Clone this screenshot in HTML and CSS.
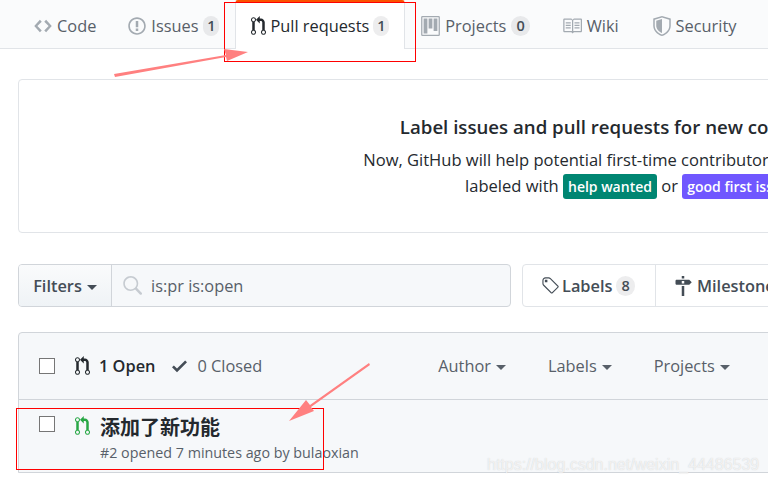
FILE: index.html
```html
<!DOCTYPE html>
<html lang="en">
<head>
  <meta charset="UTF-8" />
  <title>Pull requests</title>
  <link rel="stylesheet" href="styles.css">
</head>
<body>
  <svg class="sprite" xmlns="http://www.w3.org/2000/svg">
    <symbol id="i-pr" viewBox="0 0 12 16"><path d="M11 11.28V5c-.03-.78-.34-1.47-.94-2.06C9.46 2.35 8.78 2.03 8 2H7V0L4 3l3 3V4h1c.27.02.48.11.69.31.21.2.3.42.31.69v6.28A1.993 1.993 0 0 0 10 15a1.993 1.993 0 0 0 1-3.72zm-1 2.92c-.66 0-1.2-.55-1.2-1.2 0-.65.55-1.2 1.2-1.2.65 0 1.2.55 1.2 1.2 0 .65-.55 1.2-1.2 1.2zM4 3c0-1.11-.89-2-2-2a1.993 1.993 0 0 0-1 3.72v6.56A1.993 1.993 0 0 0 2 15a1.993 1.993 0 0 0 1-3.72V4.72c.59-.34 1-.98 1-1.72zm-.8 10c0 .66-.55 1.2-1.2 1.2-.65 0-1.2-.55-1.2-1.2 0-.65.55-1.2 1.2-1.2.65 0 1.2.55 1.2 1.2zM2 4.2C1.34 4.2.8 3.65.8 3c0-.65.55-1.2 1.2-1.2.65 0 1.2.55 1.2 1.2 0 .65-.55 1.2-1.2 1.2z"/></symbol>
    <symbol id="i-code" viewBox="0 0 14 16"><path d="M9.5 3L8 4.5 11.5 8 8 11.5 9.5 13 14 8 9.5 3zm-5 0L0 8l4.5 5L6 11.5 2.5 8 6 4.5 4.5 3z"/></symbol>
    <symbol id="i-issue" viewBox="0 0 14 16"><path d="M7 2.3c3.14 0 5.7 2.56 5.7 5.7s-2.56 5.7-5.7 5.7A5.71 5.71 0 0 1 1.3 8c0-3.14 2.56-5.7 5.7-5.7zM7 1C3.14 1 0 4.14 0 8s3.14 7 7 7 7-3.14 7-7-3.14-7-7-7zm1 3H6v5h2V4zm0 6H6v2h2v-2z"/></symbol>
    <symbol id="i-project" viewBox="0 0 15 16"><path d="M10 12h3V2h-3v10zm-4-2h3V2H6v8zm-4 4h3V2H2v12zm-1 1h13V1H1v14zM14 0H1a1 1 0 0 0-1 1v14a1 1 0 0 0 1 1h13a1 1 0 0 0 1-1V1a1 1 0 0 0-1-1z"/></symbol>
    <symbol id="i-book" viewBox="0 0 16 16"><path d="M3 5h4v1H3V5zm0 3h4V7H3v1zm0 2h4V9H3v1zm11-5h-4v1h4V5zm0 2h-4v1h4V7zm0 2h-4v1h4V9zm2-6v9c0 .55-.45 1-1 1H9.5l-1 1-1-1H2c-.55 0-1-.45-1-1V3c0-.55.45-1 1-1h5.5l1 1 1-1H15c.55 0 1 .45 1 1zm-8 .5L7.5 3H2v9h6V3.5zm7-.5H9.5l-.5.5V12h6V3z"/></symbol>
    <symbol id="i-shield" viewBox="0 0 14 16"><path d="M7 0L0 2v6.02C0 12.69 5.31 16 7 16c1.69 0 7-3.31 7-7.98V2L7 0zm5.8 8.02c0 3.9-4.5 6.78-5.8 6.78-1.3 0-5.8-2.88-5.8-6.78V2.9L7 1.25l5.8 1.65v5.12z"/><path d="M7 2.4L2.4 3.7v4.3c0 2.9 3.3 5.3 4.6 5.6V2.4z"/></symbol>
    <symbol id="i-tag" viewBox="0 0 15 16"><path d="M7.73 1.73C7.26 1.26 6.62 1 5.96 1H3.5C2.13 1 1 2.13 1 3.5v2.47c0 .66.27 1.3.73 1.77l6.06 6.06c.39.39 1.02.39 1.41 0l4.59-4.59a.996.996 0 0 0 0-1.41L7.73 1.73zM2.38 7.09c-.31-.3-.47-.7-.47-1.13V3.5c0-.88.72-1.59 1.59-1.59h2.47c.42 0 .83.16 1.13.47l6.14 6.13-4.73 4.73-6.13-6.15zM3.01 3h2v2H3V3h.01z"/></symbol>
    <symbol id="i-milestone" viewBox="0 0 14 16"><path d="M8 2H6V0h2v2zm4 5H2c-.55 0-1-.45-1-1V4c0-.55.45-1 1-1h10l2 2-2 2zM8 4H6v2h2V4zM6 16h2V8H6v8z"/></symbol>
    <symbol id="i-check" viewBox="0 0 12 16"><path d="M12 5l-8 8-4-4 1.5-1.5L4 10l6.5-6.5L12 5z"/></symbol>
    <symbol id="i-search" viewBox="0 0 16 16"><path d="M15.7 13.3l-3.81-3.83A5.93 5.93 0 0 0 13 6c0-3.31-2.69-6-6-6S1 2.69 1 6s2.69 6 6 6c1.3 0 2.48-.41 3.47-1.11l3.83 3.81c.19.2.45.3.7.3.25 0 .52-.09.7-.3a.996.996 0 0 0 0-1.41v.01zM7 10.7c-2.59 0-4.7-2.11-4.7-4.7 0-2.59 2.11-4.7 4.7-4.7 2.59 0 4.7 2.11 4.7 4.7 0 2.59-2.11 4.7-4.7 4.7z"/></symbol>
  </svg>

  <div class="page">
    <nav class="tabs">
      <a class="tab"><svg class="icon w18"><use href="#i-code"/></svg>Code</a>
      <a class="tab"><svg class="icon w18"><use href="#i-issue"/></svg>Issues<span class="count">1</span></a>
      <a class="tab active"><svg class="icon w15"><use href="#i-pr"/></svg>Pull requests<span class="count">1</span></a>
      <a class="tab"><svg class="icon w19"><use href="#i-project"/></svg>Projects<span class="count wide">0</span></a>
      <a class="tab wiki"><svg class="icon w20"><use href="#i-book"/></svg>Wiki</a>
      <a class="tab"><svg class="icon w18"><use href="#i-shield"/></svg>Security</a>
    </nav>

    <main class="content">
      <section class="banner">
        <h2>Label issues and pull requests for new contributors</h2>
        <p>Now, GitHub will help potential first-time contributors discover issues</p>
        <p>labeled with <span class="tag green">help wanted</span> or <span class="tag purple">good first issue</span></p>
      </section>

      <div class="toolbar">
        <div class="filter-group">
          <button class="filters">Filters<span class="caret"></span></button>
          <div class="search"><svg class="icon w20"><use href="#i-search"/></svg>is:pr is:open</div>
        </div>
        <div class="nav-group">
          <a class="nav-btn labels"><svg class="icon w19"><use href="#i-tag"/></svg>Labels<span class="count wide">8</span></a>
          <a class="nav-btn"><svg class="icon w18"><use href="#i-milestone"/></svg>Milestones</a>
        </div>
      </div>

      <section class="list">
        <header class="list-head">
          <span class="checkbox"></span>
          <span class="state open"><svg class="icon w15"><use href="#i-pr"/></svg>1 Open</span>
          <span class="state closed"><svg class="icon w15"><use href="#i-check"/></svg>0 Closed</span>
          <div class="sorts">
            <span>Author<span class="caret"></span></span>
            <span>Labels<span class="caret"></span></span>
            <span>Projects<span class="caret"></span></span>
          </div>
        </header>
        <div class="list-row">
          <span class="checkbox"></span>
          <svg class="icon w15 pr-green"><use href="#i-pr"/></svg>
          <div class="row-text">
            <div class="row-title">添加了新功能</div>
            <div class="row-meta">#2 opened 7 minutes ago by bulaoxian</div>
          </div>
        </div>
      </section>
    </main>
  </div>

  <!-- annotations drawn over the screenshot -->
  <div class="mark mark-tab"></div>
  <div class="mark mark-row"></div>
  <svg class="arrows" width="768" height="483" xmlns="http://www.w3.org/2000/svg">
    <path d="M114 74 L226 55 L224 49 L248 52 L227 61 L226 57 L115 77 Z"/>
    <path d="M369 363 L310 405 L306 400 L289 421 L314 411 L311 407 L370 365 Z"/>
  </svg>
  <div class="watermark">https://blog.csdn.net/weixin_44486539</div>
</body>
</html>
```

FILE: styles.css
```css
html, body {
  margin: 0;
  padding: 0;
  height: 483px;
  overflow: hidden;
}
body {
  position: relative;
  font-family: "Open Sans", "Noto Sans CJK SC", sans-serif;
  font-size: 16.35px;
  color: #24292e;
  background: #fff;
}
.sprite {
  display: none;
}
.page {
  width: 1280px;
}
.icon {
  height: 20px;
  flex: none;
  fill: currentColor;
  fill-rule: evenodd;
}
.w15 { width: 15px; }
.w18 { width: 18px; }
.w19 { width: 19px; }
.w20 { width: 20px; }

/* tabs */
.tabs {
  display: flex;
  height: 48px;
  padding-left: 18px;
  background: #fafbfc;
  border-bottom: 1px solid #e1e4e8;
}
.tab {
  display: flex;
  align-items: center;
  gap: 5px;
  height: 48px;
  padding: 3px 16px 0;
  box-sizing: border-box;
  color: #586069;
}
.tab.wiki {
  padding-right: 18px;
}
.tab .icon {
  color: #a3aab1;
}
.tab.active {
  height: 49px;
  padding: 0 15px 1px;
  color: #24292e;
  background: #fff;
  border-top: 3px solid #fb5200;
  border-left: 1px solid #e1e4e8;
  border-right: 1px solid #e1e4e8;
  border-radius: 3px 3px 0 0;
  gap: 4px;
}
.tab.active .icon {
  color: #24292e;
}
.count {
  display: inline-block;
  min-width: 16px;
  padding: 0 3.5px;
  box-sizing: border-box;
  border-radius: 20px;
  background: rgba(27, 31, 35, 0.08);
  color: #444d56;
  font-size: 14.5px;
  font-weight: 600;
  line-height: 20px;
  text-align: center;
}
.count.wide {
  padding: 0 5px;
}

/* banner */
.content {
  padding: 30px 38px 0 18px;
}
.banner {
  height: 154px;
  box-sizing: border-box;
  padding-top: 32px;
  border: 1px solid #e1e4e8;
  border-radius: 4px;
  text-align: center;
}
.banner h2 {
  margin: 0 0 5px;
  font-size: 18.65px;
  font-weight: 600;
  line-height: 30px;
}
.banner p {
  margin: 0;
  font-size: 16.55px;
  line-height: 26px;
}
.tag {
  display: inline-block;
  padding: 0 5px;
  border-radius: 3px;
  color: #fff;
  font-size: 14px;
  font-weight: 600;
  line-height: 25px;
}
.green { background: #008672; }
.purple { background: #7057ff; }

/* filter bar */
.toolbar {
  display: flex;
  gap: 11px;
  margin-top: 31px;
}
.filter-group {
  display: flex;
  height: 43px;
  width: 493px;
  box-sizing: border-box;
  border: 1px solid #d1d5da;
  border-radius: 4px;
  background: #f6f8fa;
}
.filters {
  width: 93px;
  padding: 0;
  border: 0;
  border-right: 1px solid #d1d5da;
  border-radius: 3px 0 0 3px;
  background: linear-gradient(#fafbfc, #eff3f6);
  color: #444d56;
  font: 600 16.35px "Open Sans", sans-serif;
}
.caret {
  display: inline-block;
  margin-left: 5px;
  vertical-align: middle;
  border-top: 5px solid currentColor;
  border-left: 5px solid transparent;
  border-right: 5px solid transparent;
}
.search {
  display: flex;
  align-items: center;
  gap: 9px;
  padding-left: 10px;
  color: #586069;
}
.search .icon {
  color: #c6cbd1;
}
.nav-group {
  display: flex;
  height: 43px;
  flex: 1;
  box-sizing: border-box;
  border: 1px solid #e1e4e8;
  border-radius: 4px;
}
.nav-btn {
  display: flex;
  align-items: center;
  gap: 5px;
  padding: 0 18px;
  color: #444d56;
  font-weight: 600;
}
.nav-btn.labels {
  width: 133px;
  box-sizing: border-box;
  gap: 2px;
  border-right: 1px solid #e1e4e8;
}
.nav-btn.labels .count {
  margin-left: 2px;
}

/* pull request list */
.list {
  margin-top: 25px;
  border: 1px solid #d1d5da;
  border-radius: 4px 4px 0 0;
  background: #f6f8fa;
}
.list-head {
  display: flex;
  align-items: center;
  height: 66px;
  padding-left: 20px;
  border-bottom: 1px solid #d1d5da;
  color: #586069;
}
.checkbox {
  flex: none;
  display: block;
  width: 14px;
  height: 14px;
  border: 1px solid #767676;
  background: #fff;
}
.state {
  display: flex;
  align-items: center;
  gap: 9px;
}
.state.open {
  margin-left: 20px;
  color: #24292e;
  font-weight: 600;
}
.state.closed {
  margin-left: 17px;
  gap: 10px;
}
.state.closed .icon {
  color: #444d56;
}
.sorts {
  display: flex;
  gap: 42px;
  margin-left: 176px;
}
.list-row {
  display: flex;
  align-items: flex-start;
  height: 72px;
  box-sizing: border-box;
  padding: 16px 0 0 20px;
}
.pr-green {
  margin: 0 0 0 20px;
  color: #28a745;
}
.row-text {
  margin-left: 10px;
}
.row-title {
  margin-top: -1px;
  font-size: 20px;
  font-weight: 700;
  line-height: 26px;
}
.row-meta {
  margin-top: 2px;
  color: #586069;
  font-size: 14.3px;
  line-height: 20px;
}

/* annotations */
.mark {
  position: absolute;
  box-sizing: border-box;
  border: 1px solid #f00;
}
.mark-tab {
  left: 224px;
  top: 2px;
  width: 192px;
  height: 60px;
}
.mark-row {
  left: 16px;
  top: 408px;
  width: 308px;
  height: 62px;
}
.arrows {
  position: absolute;
  left: 0;
  top: 0;
  fill: #ff8080;
}
.watermark {
  position: absolute;
  left: 487px;
  top: 454px;
  color: rgba(255, 255, 255, 0.7);
  font-family: "Liberation Sans", sans-serif;
  font-size: 16px;
  line-height: 22px;
  text-shadow: 0 0 1px rgba(120, 120, 120, 0.35);
}
```
